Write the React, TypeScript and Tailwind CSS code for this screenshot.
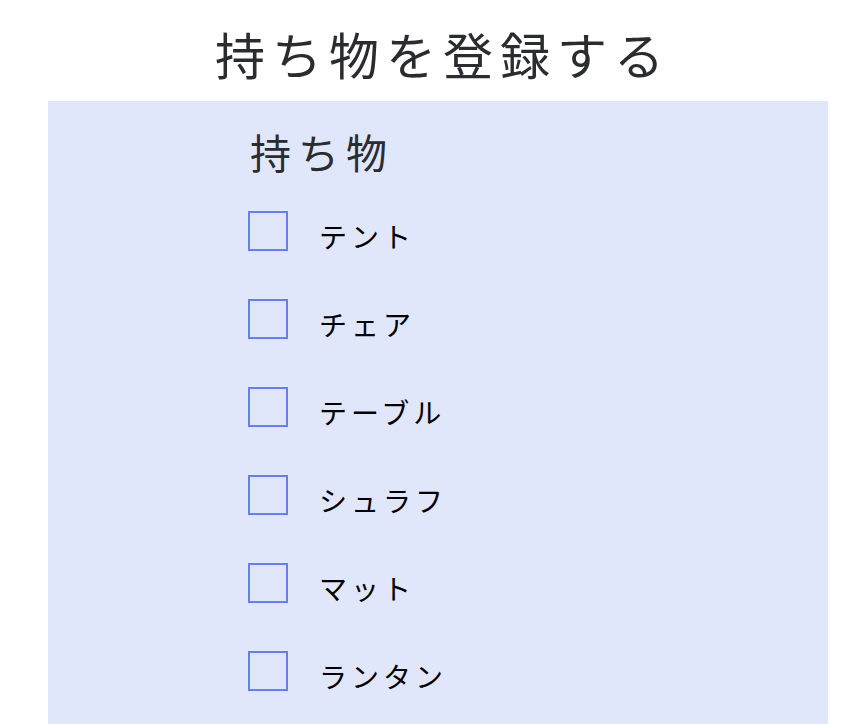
const items = ['テント', 'チェア', 'テーブル', 'シュラフ', 'マット', 'ランタン'];

export default function App() {
  return (
    <div
      className="h-screen overflow-hidden bg-white"
      style={{ fontFamily: '"Noto Sans CJK JP", "Noto Sans", sans-serif' }}
    >
      <h1 className="pl-[18px] pt-[16px] text-center text-[50px] font-normal leading-[74px] tracking-[7px] text-[#2a2c30]">
        持ち物を登録する
      </h1>

      <section className="ml-[48px] mt-[11px] w-[780px] bg-[#e1e7fb] pb-[34px] pl-[202px] pt-[20px]">
        <h2 className="text-[41px] font-normal leading-[60px] tracking-[7px] text-[#2a2c30]">持ち物</h2>

        <ul className="mt-[30px] flex flex-col gap-[48px]">
          {items.map((item) => (
            <li key={item} className="-ml-[2px] flex h-[40px] items-center">
              <input
                type="checkbox"
                className="h-[40px] w-[40px] shrink-0 appearance-none border-2 border-[#6580ee] bg-transparent"
              />
              <span className="ml-[31px] mt-[10px] text-[28px] leading-none tracking-[4px] text-black">
                {item}
              </span>
            </li>
          ))}
        </ul>
      </section>
    </div>
  );
}
